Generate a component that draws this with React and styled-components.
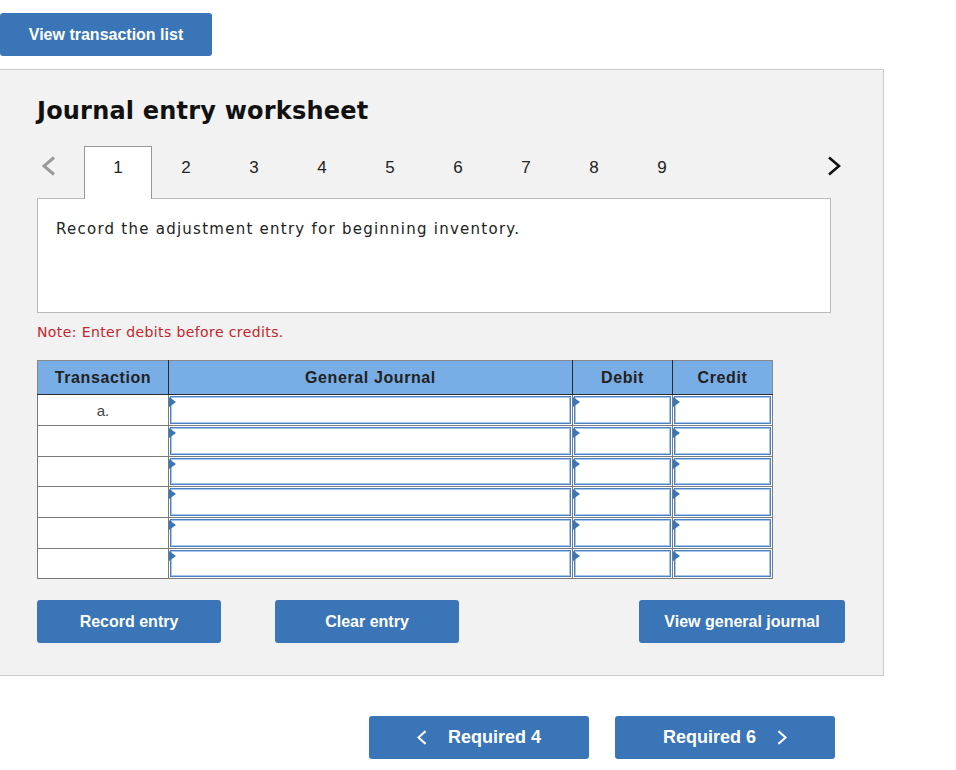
import React from 'react';
import styled, { createGlobalStyle } from 'styled-components';

const GlobalStyle = createGlobalStyle`
  html, body {
    margin: 0;
    padding: 0;
    background: #ffffff;
  }
  body {
    font-family: "Liberation Sans", Arial, sans-serif;
    color: #222222;
  }
`;

const BLUE = '#3a75b8';

const Page = styled.div`
  width: 956px;
  padding-top: 13px;
`;

const Button = styled.button`
  display: flex;
  align-items: center;
  justify-content: center;
  gap: ${(p) => p.gap || 0}px;
  width: ${(p) => p.width}px;
  height: 43px;
  padding: 0;
  border: none;
  border-radius: 3px;
  background: ${BLUE};
  color: #ffffff;
  font-family: "Liberation Sans", Arial, sans-serif;
  font-weight: bold;
  font-size: ${(p) => p.size || 16}px;
  cursor: pointer;
`;

const TopBar = styled.div`
  height: 43px;
  margin-bottom: 13px;
`;

const Panel = styled.section`
  width: 884px;
  border-top: 1px solid #cccccc;
  border-right: 1px solid #cccccc;
  border-bottom: 1px solid #cccccc;
  background: #f2f2f2;
  padding: 26px 52px 32px 37px;
  box-sizing: border-box;
`;

const Title = styled.h2`
  margin: 0 0 20px 0;
  font-family: "DejaVu Sans", Verdana, sans-serif;
  font-weight: bold;
  font-size: 24px;
  line-height: 30px;
  letter-spacing: 0.2px;
  color: #111111;
`;

const TabBar = styled.div`
  display: flex;
  align-items: stretch;
  height: 53px;
  margin-bottom: -1px;
  position: relative;
  z-index: 1;
`;

const Arrow = styled.div`
  display: flex;
  align-items: flex-start;
  justify-content: flex-start;
  width: 47px;
  padding: 10px 0 0 5px;
  box-sizing: border-box;
`;

const ArrowRight = styled(Arrow)`
  margin-left: auto;
  margin-right: -12px;
  width: 18px;
  padding-left: 2px;
`;

const Tab = styled.div`
  width: 68px;
  box-sizing: border-box;
  display: flex;
  justify-content: center;
  padding-top: 11px;
  font-size: 17px;
  color: #222222;
  background: ${(p) => (p.active ? '#ffffff' : 'transparent')};
  border: 1px solid ${(p) => (p.active ? '#999999' : 'transparent')};
  border-bottom: none;
`;

const Prompt = styled.div`
  height: 115px;
  box-sizing: border-box;
  background: #ffffff;
  border: 1px solid #bbbbbb;
  padding: 21px 18px;
  font-family: "DejaVu Sans", Verdana, sans-serif;
  font-size: 15px;
  letter-spacing: 1.25px;
  color: #222222;
`;

const Note = styled.p`
  margin: 10px 0 19px 0;
  font-family: "DejaVu Sans", Verdana, sans-serif;
  font-size: 14px;
  line-height: 18px;
  letter-spacing: 0.4px;
  color: #c0262c;
`;

const Table = styled.table`
  border-collapse: collapse;
  border: 1px solid #888888;
  background: #ffffff;
`;

const Th = styled.th`
  width: ${(p) => p.w}px;
  height: 33px;
  padding: 0;
  background: #79ade5;
  border: 1px solid #2b2b2b;
  border-top: 1px solid #888888;
  font-size: 16px;
  font-weight: bold;
  letter-spacing: 0.6px;
  color: #222222;
  &:first-child { border-left-color: #888888; }
  &:last-child { border-right-color: #888888; }
`;

const Td = styled.td`
  height: ${(p) => p.h - 1}px;
  padding: 0;
  border: 1px solid #7a7a7a;
  text-align: center;
  font-size: 15px;
  color: #444444;
  vertical-align: middle;
`;

const InputCell = styled(Td)`
  position: relative;
  padding: 1px;
  height: ${(p) => p.h - 3}px;
`;

const Field = styled.div`
  height: ${(p) => p.h - 3}px;
  box-sizing: border-box;
  border: 1px solid #4a80c4;
  box-shadow: inset 0 0 0 1px #a9c7ea;
  background: #ffffff;
`;

const Marker = styled.span`
  position: absolute;
  top: 2px;
  left: 0;
  width: 0;
  height: 0;
  border-top: 5px solid transparent;
  border-bottom: 5px solid transparent;
  border-left: 7px solid ${BLUE};
`;

const ActionRow = styled.div`
  display: flex;
  align-items: center;
  gap: 54px;
  margin-top: 21px;
  width: 808px;
`;

const Spacer = styled.div`
  flex: 1;
`;

const NavRow = styled.div`
  display: flex;
  gap: 26px;
  margin-top: 40px;
  padding-left: 369px;
`;

const Chevron = ({ dir = 'right', color = '#111', w = 14, h = 20, stroke = 2.6 }) => (
  <svg width={w} height={h} viewBox="0 0 14 20" fill="none" preserveAspectRatio="none">
    <path
      d={dir === 'right' ? 'M2 1.5 L12 10 L2 18.5' : 'M12 1.5 L2 10 L12 18.5'}
      stroke={color}
      strokeWidth={stroke}
      strokeLinecap="butt"
    />
  </svg>
);

const rows = [
  { label: 'a.', h: 31 },
  { label: '', h: 31 },
  { label: '', h: 30 },
  { label: '', h: 31 },
  { label: '', h: 31 },
  { label: '', h: 30 },
];

export default function App() {
  return (
    <Page>
      <GlobalStyle />
      <TopBar>
        <Button width={212}>View transaction list</Button>
      </TopBar>
      <Panel>
        <Title>Journal entry worksheet</Title>
        <TabBar>
          <Arrow>
            <Chevron dir="left" color="#9a9a9a" w={14} h={20} stroke={3} />
          </Arrow>
          {[1, 2, 3, 4, 5, 6, 7, 8, 9].map((n) => (
            <Tab key={n} active={n === 1}>{n}</Tab>
          ))}
          <ArrowRight>
            <Chevron dir="right" color="#111111" w={14} h={20} stroke={2.6} />
          </ArrowRight>
        </TabBar>
        <Prompt>Record the adjustment entry for beginning inventory.</Prompt>
        <Note>Note: Enter debits before credits.</Note>
        <Table>
          <thead>
            <tr>
              <Th w={130}>Transaction</Th>
              <Th w={403}>General Journal</Th>
              <Th w={99}>Debit</Th>
              <Th w={99}>Credit</Th>
            </tr>
          </thead>
          <tbody>
            {rows.map((row, i) => (
              <tr key={i}>
                <Td h={row.h}>{row.label}</Td>
                {[0, 1, 2].map((c) => (
                  <InputCell key={c} h={row.h}>
                    <Field h={row.h} />
                    <Marker />
                  </InputCell>
                ))}
              </tr>
            ))}
          </tbody>
        </Table>
        <ActionRow>
          <Button width={184}>Record entry</Button>
          <Button width={184}>Clear entry</Button>
          <Spacer />
          <Button width={206}>View general journal</Button>
        </ActionRow>
      </Panel>
      <NavRow>
        <Button width={220} size={18} gap={21}>
          <Chevron dir="left" color="#ffffff" w={10} h={15} stroke={2.8} />
          Required 4
        </Button>
        <Button width={220} size={18} gap={21}>
          Required 6
          <Chevron dir="right" color="#ffffff" w={10} h={15} stroke={2.8} />
        </Button>
      </NavRow>
    </Page>
  );
}
